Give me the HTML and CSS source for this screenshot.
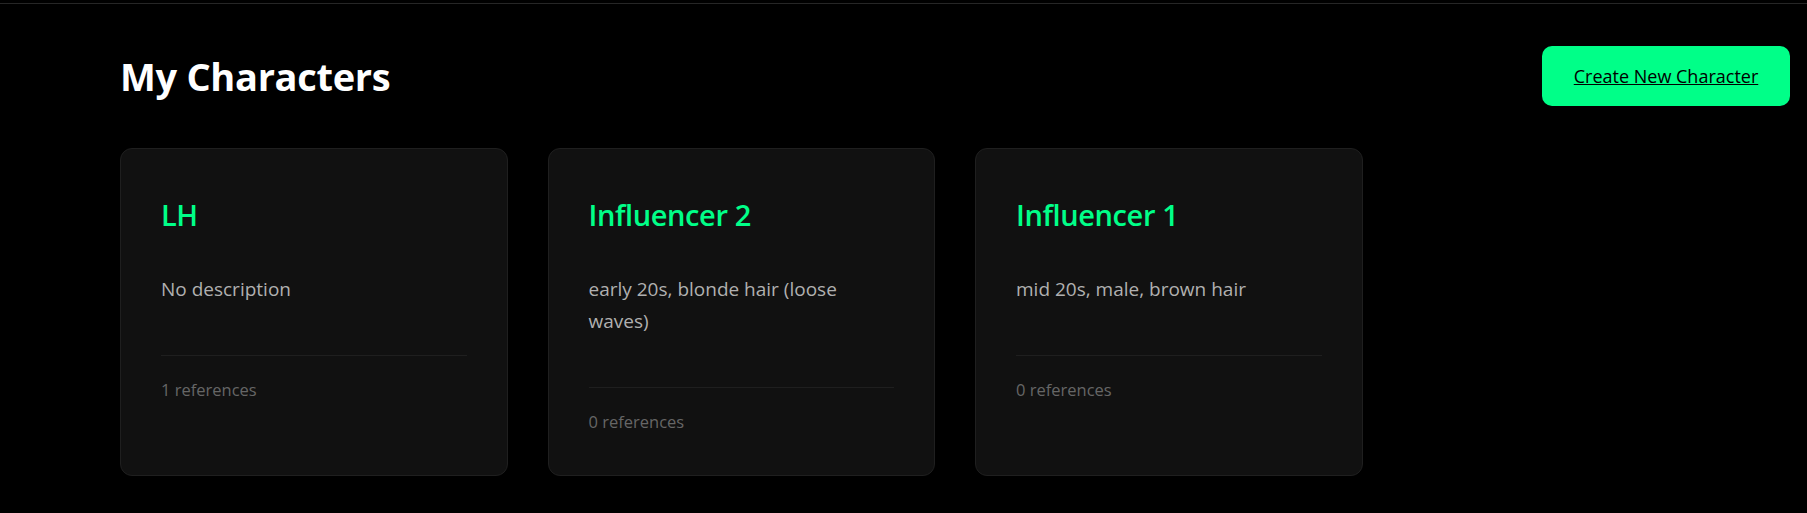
FILE: index.html
```html
<!DOCTYPE html>
<html lang="en">
<head>
<meta charset="utf-8">
<title>My Characters</title>
<link rel="stylesheet" href="styles.css">
</head>
<body>
<div class="topbar"></div>
<main class="page">
  <header class="page-header">
    <h1 class="page-title">My Characters</h1>
    <a class="btn-create" href="#">Create New Character</a>
  </header>
  <section class="grid">
    <article class="card">
      <h2 class="card-title">LH</h2>
      <p class="card-desc">No description</p>
      <div class="card-footer">1 references</div>
    </article>
    <article class="card">
      <h2 class="card-title">Influencer 2</h2>
      <p class="card-desc">early 20s, blonde hair (loose waves)</p>
      <div class="card-footer">0 references</div>
    </article>
    <article class="card">
      <h2 class="card-title">Influencer 1</h2>
      <p class="card-desc">mid 20s, male, brown hair</p>
      <div class="card-footer">0 references</div>
    </article>
  </section>
</main>
</body>
</html>
```
FILE: styles.css
```css
html, body {
  margin: 0;
  padding: 0;
  background: #000;
}
body {
  font-family: "Open Sans", "Noto Sans", sans-serif;
  color: #fff;
}
.topbar {
  height: 3px;
  border-bottom: 1px solid #262626;
}
.page {
  padding: 42px 17px 40px 120px;
}
.page-header {
  display: flex;
  justify-content: space-between;
  align-items: center;
  height: 60px;
  margin-bottom: 42px;
}
.page-title {
  margin: 0;
  font-size: 38px;
  font-weight: 700;
  line-height: 48px;
  letter-spacing: -0.3px;
  color: #fff;
}
.btn-create {
  display: block;
  width: 248px;
  box-sizing: border-box;
  text-align: center;
  background: #00ff88;
  color: #000;
  font-size: 18px;
  font-weight: 500;
  line-height: 60px;
  border-radius: 10px;
  text-decoration: underline;
}
.grid {
  display: grid;
  grid-template-columns: repeat(4, 1fr);
  gap: 40px;
}
.card {
  background: #111;
  border: 1px solid #1f1f1f;
  border-radius: 12px;
  padding: 42px 40px 39px;
}
.card-title {
  margin: 0;
  font-size: 29px;
  font-weight: 600;
  line-height: 48px;
  letter-spacing: -0.4px;
  color: #00ff88;
}
.card-desc {
  margin: 34px 0 50px;
  font-size: 19px;
  line-height: 32px;
  color: #b0b0b0;
}
.card-footer {
  border-top: 1px solid #1f1f1f;
  padding-top: 19px;
  font-size: 16.5px;
  line-height: 29px;
  color: #666;
}
```
